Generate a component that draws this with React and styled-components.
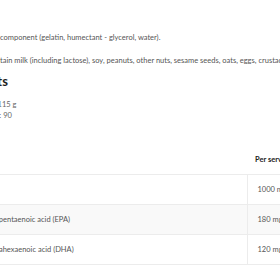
import React from "react";
import styled, { createGlobalStyle } from "styled-components";

const rows = [
    { name: "Oil", value: "1000 mg" },
    { name: "Eicosapentaenoic acid (EPA)", value: "180 mg" },
    { name: "Docosahexaenoic acid (DHA)", value: "120 mg" },
];

const App = () => {
    return (
        <>
            <GlobalStyle />
            <Page>
                <Text>Capsule component (gelatin, humectant - glycerol, water).</Text>
                <Text>
                    May contain milk (including lactose), soy, peanuts, other nuts, sesame seeds, oats, eggs, crustaceans, fish and molluscs.
                </Text>
                <Heading>Facts</Heading>
                <Info>
                    <InfoLine>Weight: 115 g</InfoLine>
                    <InfoLine>Capsules: 90</InfoLine>
                </Info>
                <Table>
                    <colgroup>
                        <col style={{ width: 275 }} />
                        <col style={{ width: 200 }} />
                    </colgroup>
                    <thead>
                        <tr>
                            <Th></Th>
                            <Th>Per serving</Th>
                        </tr>
                    </thead>
                    <tbody>
                        {rows.map((row, i) => (
                            <Row key={row.name} $striped={i % 2 === 1}>
                                <Cell>{row.name}</Cell>
                                <ValueCell>{row.value}</ValueCell>
                            </Row>
                        ))}
                    </tbody>
                </Table>
            </Page>
        </>
    );
};

export default App;

const GlobalStyle = createGlobalStyle`
  body {
    margin: 0;
    background: #fff;
    overflow: hidden;
    font-family: "Lato", "Liberation Sans", sans-serif;
  }
`;

const Page = styled.div`
  width: 600px;
  margin-left: -28px;
  padding-top: 33px;
  color: #555;
`;

const Text = styled.p`
  margin: 0 0 13px;
  font-size: 7.5px;
  line-height: 10px;
  white-space: nowrap;
`;

const Heading = styled.h2`
  margin: -5px 0 11px 6px;
  font-size: 13px;
  line-height: 14px;
  font-weight: 700;
  color: #1e1e1e;
`;

const Info = styled.div`
  display: flex;
  flex-direction: column;
  margin-left: -2px;
`;

const InfoLine = styled.div`
  font-size: 7.5px;
  line-height: 11px;
  color: #666;
`;

const Table = styled.table`
  margin-top: 24px;
  width: 475px;
  table-layout: fixed;
  border-collapse: collapse;
  font-size: 7.5px;
`;

const Th = styled.th`
  height: 29px;
  padding: 0 8px;
  text-align: left;
  font-weight: 700;
  color: #222;
  border-bottom: 1px solid #ececec;
`;

const Row = styled.tr`
  background: ${(p) => (p.$striped ? "#f9f9f9" : "#fff")};
`;

const Cell = styled.td`
  height: 29px;
  padding: 0 10px 0 6px;
  border-bottom: 1px solid #ececec;
  white-space: nowrap;
`;

const ValueCell = styled(Cell)`
  padding-left: 10px;
  border-left: 1px solid #ececec;
`;
